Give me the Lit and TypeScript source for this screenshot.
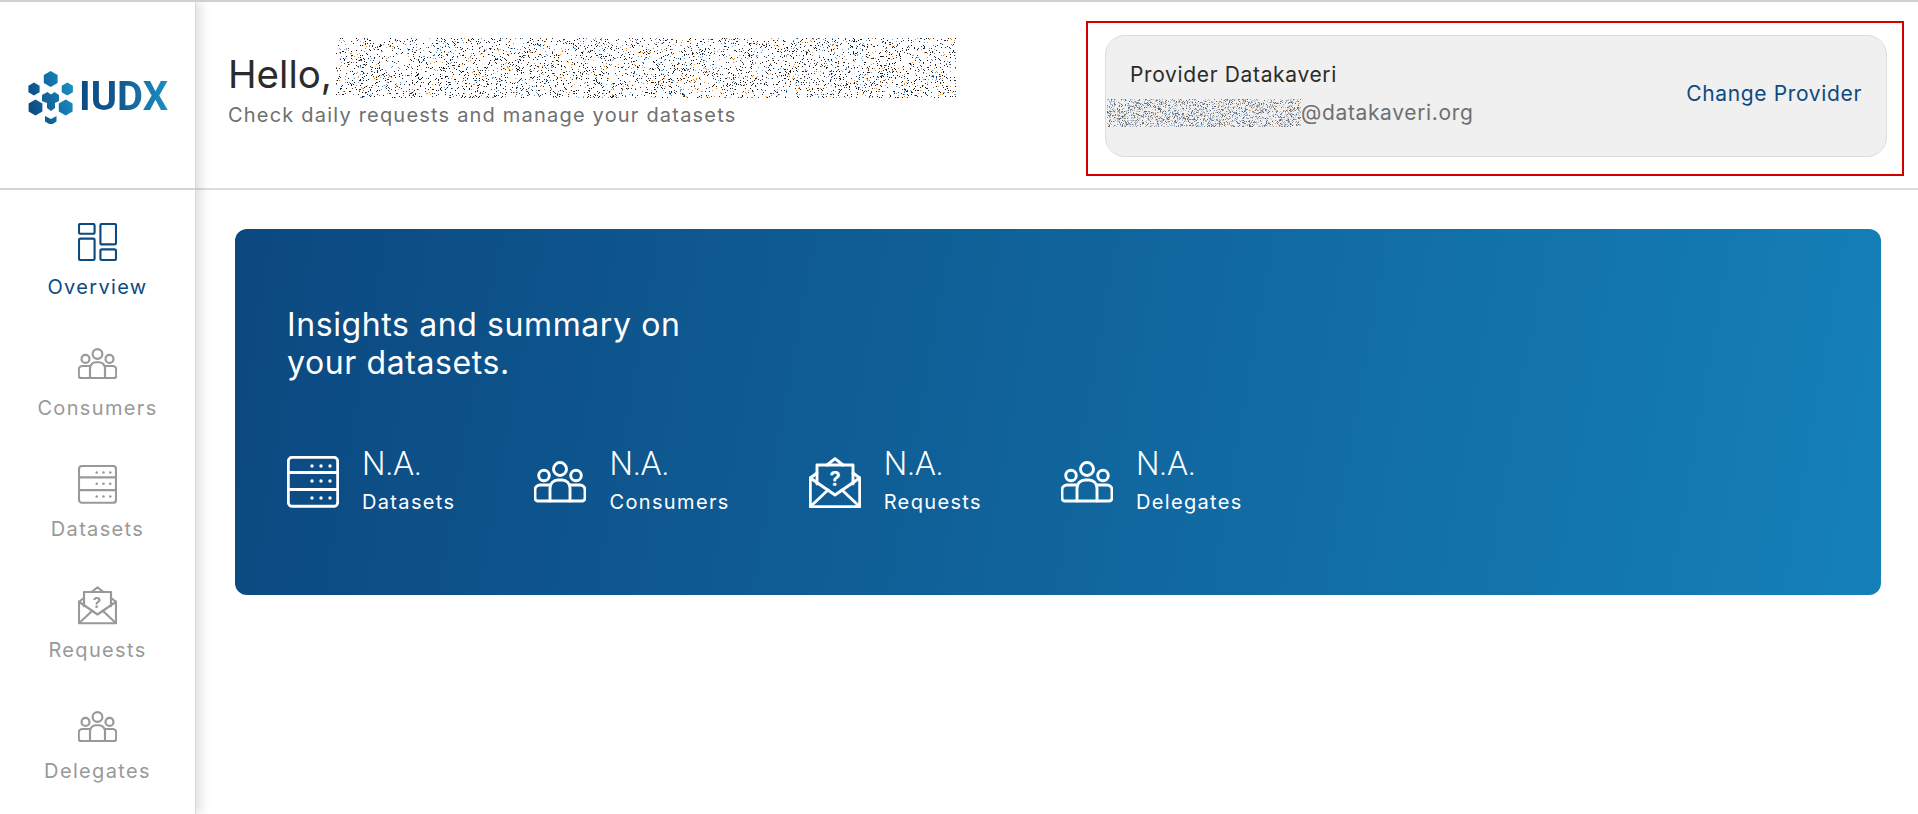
import { LitElement, html, css, svg } from "lit";
import { customElement, property } from "lit/decorators.js";

const rng = (seed: number) => () => {
  seed = (seed * 1664525 + 1013904223) >>> 0;
  return seed / 4294967296;
};

@customElement("noise-box")
class NoiseBox extends LitElement {
  @property({ type: Number }) w = 100;
  @property({ type: Number }) h = 20;
  @property({ type: Number }) density = 0.2;
  @property({ type: Number }) seed = 1;
  @property() palette = "#222";
  static styles = css`
    :host { display: block; flex: none; }
    svg { display: block; }
  `;
  render() {
    const colours = this.palette.split(",");
    const r = rng(this.seed);
    const parts: string[][] = colours.map(() => []);
    for (let y = 0; y < this.h; y++) {
      for (let x = 0; x < this.w; x++) {
        if (r() < this.density) {
          parts[Math.floor(r() * colours.length)].push(`M${x} ${y}h1v1h-1z`);
        }
      }
    }
    return html`<svg width=${this.w} height=${this.h} viewBox="0 0 ${this.w} ${this.h}" shape-rendering="crispEdges">
      ${colours.map((c, i) => svg`<path fill=${c} d=${parts[i].join("")}></path>`)}
    </svg>`;
  }
}

const peopleIcon = svg`
  <circle cx="26" cy="8" r="6.5"/><circle cx="10" cy="14.5" r="5.3"/><circle cx="42" cy="14.5" r="5.3"/>
  <path d="M15.7 24H6a5 5 0 0 0-5 5v8a3 3 0 0 0 3 3h44a3 3 0 0 0 3-3v-8a5 5 0 0 0-5-5H36"/>
  <path d="M16 40V27a8 8 0 0 1 8-8h4a8 8 0 0 1 8 8v13"/>`;

const serverIcon = svg`
  <rect x="1.3" y="1.3" width="49.4" height="49" rx="4"/>
  <path d="M1.3 16.5h49.4M1.3 33.5h49.4"/>
  <g class="dots">
    <circle cx="25" cy="10" r="1.7"/><circle cx="34" cy="10" r="1.7"/><circle cx="43" cy="10" r="1.7"/>
    <circle cx="25" cy="25" r="1.7"/><circle cx="34" cy="25" r="1.7"/><circle cx="43" cy="25" r="1.7"/>
    <circle cx="25" cy="42" r="1.7"/><circle cx="34" cy="42" r="1.7"/><circle cx="43" cy="42" r="1.7"/>
  </g>`;

const mailIcon = svg`
  <path d="M1.3 21v28.7h49.4V21"/>
  <path d="M1.3 21 26 38l24.7-17"/>
  <path d="M2 49 19 33M50 49 33 33"/>
  <path d="M1.3 21 8 16M50.7 21 44 16M18 8l8-6.300 8 6.300"/>
  <path d="M8 27V8h36v19"/>
  <text x="26" y="29" class="mark">?</text>`;

const gridIcon = svg`
  <g stroke-width="2.2">
    <rect x="1" y="1" width="16" height="10" rx="1.500"/>
    <rect x="23" y="1" width="16" height="21" rx="1.500"/>
    <rect x="1" y="16" width="16" height="22" rx="1.500"/>
    <rect x="23" y="27" width="16" height="11" rx="1.500"/>
  </g>`;

const hex = (cx: number, cy: number, r: number) => {
  const pts = [0, 60, 120, 180, 240, 300].map((a) => {
    const t = ((a - 90) * Math.PI) / 180;
    return `${(cx + r * Math.cos(t)).toFixed(1)},${(cy + r * Math.sin(t)).toFixed(1)}`;
  });
  return pts.join(" ");
};

const navItems = [
  { label: "Overview", icon: gridIcon, box: "0 0 40 39", active: true },
  { label: "Consumers", icon: peopleIcon, box: "0 0 52 42", active: false },
  { label: "Datasets", icon: serverIcon, box: "0 0 52 52", active: false },
  { label: "Requests", icon: mailIcon, box: "0 0 52 51", active: false },
  { label: "Delegates", icon: peopleIcon, box: "0 0 52 42", active: false },
];

const stats = [
  { label: "Datasets", icon: serverIcon, box: "0 0 52 52" },
  { label: "Consumers", icon: peopleIcon, box: "0 0 52 42" },
  { label: "Requests", icon: mailIcon, box: "0 0 52 51" },
  { label: "Delegates", icon: peopleIcon, box: "0 0 52 42" },
];

@customElement("app-root")
class AppRoot extends LitElement {
  static styles = css`
    :host {
      display: flex;
      height: 100vh;
      overflow: hidden;
      background: #fff;
      box-sizing: border-box;
      border-top: 2px solid #d0d0d0;
      font-family: Inter, "Liberation Sans", sans-serif;
      color: #2b2b2b;
    }
    aside {
      flex: none;
      width: 196px;
      box-sizing: border-box;
      border-right: 1px solid #d8d8d8;
      box-shadow: 5px 0 10px rgba(0, 0, 0, 0.12);
      position: relative;
      z-index: 1;
      background: #fff;
    }
    .logo-cell {
      height: 188px;
      box-sizing: border-box;
      border-bottom: 2px solid #d4d4d4;
      display: flex;
      align-items: center;
      gap: 5px;
      padding: 3px 0 0 28px;
    }
    .logo-cell svg { flex: none; display: block; }
    .logo-text {
      font-family: Roboto, sans-serif;
      font-weight: 700;
      font-size: 40px;
      line-height: 1;
      background: linear-gradient(90deg, #0c4a82 0%, #11598f 45%, #1a90c4 100%);
      -webkit-background-clip: text;
      background-clip: text;
      color: transparent;
    }
    nav {
      display: flex;
      flex-direction: column;
      align-items: center;
      padding-top: 33px;
    }
    .nav-item {
      display: flex;
      flex-direction: column;
      align-items: center;
      height: 121px;
      color: #999;
      font-size: 20px;
      letter-spacing: 1.35px;
    }
    .nav-item.active { color: #0d4a82; }
    .nav-icon {
      height: 39px;
      display: flex;
      align-items: center;
      margin-bottom: 13px;
    }
    .nav-item svg { width: 39px; height: auto; display: block; }
    .ico { fill: none; stroke: currentColor; stroke-width: 2.9; stroke-linejoin: round; stroke-linecap: round; }
    .dots circle { fill: currentColor; stroke: none; }
    .mark { fill: currentColor; stroke: none; font-size: 20px; font-weight: 700; text-anchor: middle; font-family: Inter, sans-serif; }
    main { flex: 1; min-width: 0; display: flex; flex-direction: column; }
    header {
      height: 188px;
      box-sizing: border-box;
      border-bottom: 2px solid #dcdcdc;
      display: flex;
      align-items: flex-start;
      justify-content: space-between;
      padding: 19px 14px 0 32px;
    }
    .greeting { padding-top: 17px; }
    .hello { display: flex; align-items: flex-end; gap: 4px; font-size: 38.5px; line-height: 46px; }
    .hello span { margin-bottom: 1px; }
    .sub { font-size: 20px; line-height: 24px; color: #6f6f6f; letter-spacing: 1.2px; margin-top: 5px; }
    .annot {
      width: 818px;
      height: 155px;
      box-sizing: border-box;
      border: 2px solid #d40000;
      padding: 12px 15px 0 17px;
    }
    .card {
      height: 122px;
      box-sizing: border-box;
      background: #f0f0f0;
      border: 1px solid #dcdcdc;
      border-radius: 20px;
      display: flex;
      align-items: center;
      justify-content: space-between;
      padding: 0 24px 5px 1px;
      font-size: 21px;
      letter-spacing: 0.65px;
    }
    .who { display: flex; flex-direction: column; gap: 10px; }
    .prov { padding-left: 23px; line-height: 28px; color: #2b2b2b; }
    .mail { display: flex; align-items: center; color: #6f6f6f; }
    .change { color: #0d4a82; }
    .content { padding: 39px 37px 0 39px; }
    .banner {
      height: 366px;
      box-sizing: border-box;
      border-radius: 12px;
      background: linear-gradient(100deg, #0c4880 0%, #1580b8 100%);
      color: #fff;
      padding: 77px 52px 0;
    }
    h2 { margin: 0; font-size: 32px; font-weight: 400; line-height: 38px; letter-spacing: 0.6px; }
    .stats { display: flex; align-items: center; gap: 79px; margin-top: 62px; }
    .stat { display: flex; align-items: center; gap: 23px; }
    .stat svg { width: 52px; height: auto; display: block; }
    .val { font-family: Roboto, sans-serif; font-size: 33px; font-weight: 300; line-height: 40px; }
    .lab { font-size: 20px; line-height: 36px; letter-spacing: 1.35px; }
  `;

  render() {
    const ink = "#1c1c1c,#2a3550,#e8963c,#5a9bd8,#111,#333";
    const soft = "#8f8f98,#d0b48f,#6f7f9f,#c5c5c5,#5f6570,#9fc0de";
    return html`
      <aside>
        <div class="logo-cell">
          <svg width="46" height="54" viewBox="28 67 46 54">
            <defs>
              <linearGradient id="lg" gradientUnits="userSpaceOnUse" x1="28" y1="100" x2="74" y2="86">
                <stop offset="0" stop-color="#0c4a82"></stop>
                <stop offset="1" stop-color="#1a90c4"></stop>
              </linearGradient>
            </defs>
            <g fill="url(#lg)">
              <polygon points=${hex(50.7, 76, 8)}></polygon>
              <polygon points=${hex(34, 86, 6.5)}></polygon>
              <polygon points=${hex(35.5, 104.500, 8)}></polygon>
              <polygon points=${hex(67.300, 86, 6.5)}></polygon>
              <polygon points=${hex(65.7, 104.500, 8)}></polygon>
              <polygon points="45,113 51,116 56.500,113 56.500,118.500 51,122 45,118.500"></polygon>
              <polygon points="47.500,89 51,91.500 54.500,89 59,92 59,98 55,100 55,105 51,108 47,105 47,100 42,98 42,92"></polygon>
            </g>
          </svg>
          <span class="logo-text">IUDX</span>
        </div>
        <nav>
          ${navItems.map(
            (n) => html`<div class="nav-item ${n.active ? "active" : ""}">
              <div class="nav-icon"><svg class="ico" viewBox=${n.box}>${n.icon}</svg></div>
              <span>${n.label}</span>
            </div>`
          )}
        </nav>
      </aside>
      <main>
        <header>
          <div class="greeting">
            <div class="hello">
              <span>Hello,</span>
              <noise-box w="620" h="60" density="0.11" seed="7" palette=${ink}></noise-box>
            </div>
            <div class="sub">Check daily requests and manage your datasets</div>
          </div>
          <div class="annot">
            <div class="card">
              <div class="who">
                <div class="prov">Provider Datakaveri</div>
                <div class="mail">
                  <noise-box w="194" h="28" density="0.36" seed="11" palette=${soft}></noise-box>
                  <span>@datakaveri.org</span>
                </div>
              </div>
              <div class="change">Change Provider</div>
            </div>
          </div>
        </header>
        <div class="content">
          <section class="banner">
            <h2>Insights and summary on<br />your datasets.</h2>
            <div class="stats">
              ${stats.map(
                (s) => html`<div class="stat">
                  <svg class="ico" viewBox=${s.box}>${s.icon}</svg>
                  <div>
                    <div class="val">N.A.</div>
                    <div class="lab">${s.label}</div>
                  </div>
                </div>`
              )}
            </div>
          </section>
        </div>
      </main>
    `;
  }
}
